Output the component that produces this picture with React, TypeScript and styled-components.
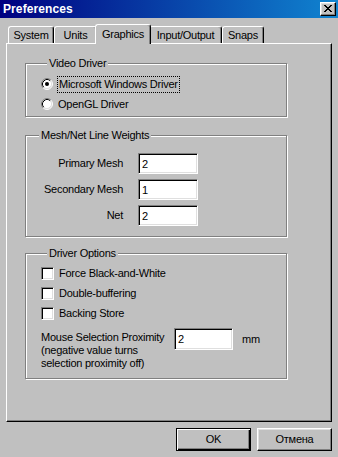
import React from "react";
import styled, { createGlobalStyle } from "styled-components";

const Global = createGlobalStyle`
  html, body { margin: 0; padding: 0; background: #c0c0c0; }
  body { font-family: "Liberation Sans", Arial, sans-serif; font-size: 11px; letter-spacing: -0.25px; color: #000; }
  * { box-sizing: border-box; }
`;

const Window = styled.div`
  width: 338px;
  height: 457px;
  background: #c0c0c0;
  display: flex;
  flex-direction: column;
  overflow: hidden;
`;

const TitleBar = styled.div`
  height: 18px;
  flex: none;
  display: flex;
  align-items: center;
  justify-content: space-between;
  padding: 0 2px 1px 3px;
  background: linear-gradient(90deg, #000080 0%, #1084d0 100%);
`;

const Title = styled.span`
  color: #fff;
  font-weight: bold;
  font-size: 12px;
  line-height: 14px;
  letter-spacing: 0.1px;
`;

const CloseButton = styled.div`
  width: 16px;
  height: 14px;
  display: flex;
  align-items: center;
  justify-content: center;
  background: #c0c0c0;
  border-top: 1px solid #fff;
  border-left: 1px solid #fff;
  border-right: 1px solid #000;
  border-bottom: 1px solid #000;
  box-shadow: inset -1px -1px #808080, inset 1px 1px #dfdfdf;
  padding-bottom: 1px;
`;

const Body = styled.div`
  flex: 1;
  display: flex;
  flex-direction: column;
  padding: 6px 6px 0 6px;
`;

const TabStrip = styled.div`
  position: relative;
  z-index: 1;
  height: 20px;
  margin-bottom: -1px;
  padding-left: 2px;
  display: flex;
  align-items: flex-end;
`;

const Tab = styled.div<{ $w: number; $active?: boolean }>`
  position: relative;
  z-index: ${(p) => (p.$active ? 2 : 1)};
  width: ${(p) => p.$w + (p.$active ? 4 : 0)}px;
  margin: ${(p) => (p.$active ? "0 -2px 0 -2px" : "0 0 1px 0")};
  height: ${(p) => (p.$active ? 20 : 17)}px;
  background: #c0c0c0;
  border-top: 1px solid #fff;
  border-left: 1px solid #fff;
  border-right: 1px solid #000;
  border-radius: 3px 3px 0 0;
  box-shadow: inset -1px 0 #808080;
  display: flex;
  justify-content: center;
  align-items: ${(p) => (p.$active ? "flex-start" : "center")};
  padding-top: ${(p) => (p.$active ? "3px" : "0")};
  line-height: 13px;
  white-space: nowrap;
`;

const Panel = styled.div`
  height: 379px;
  flex: none;
  border-top: 1px solid #fff;
  border-left: 1px solid #fff;
  border-right: 1px solid #000;
  border-bottom: 1px solid #000;
  box-shadow: inset -1px -1px #808080;
  padding: 13px 0 0 18px;
  display: flex;
  flex-direction: column;
  align-items: flex-start;
`;

const Group = styled.fieldset<{ $mt: number; $pad: string }>`
  width: 262px;
  min-width: 0;
  margin: ${(p) => p.$mt}px 0 0 0;
  padding: ${(p) => p.$pad};
  border: 1px solid #808080;
  box-shadow: inset 1px 1px #fff, 1px 1px #fff;
`;

const Legend = styled.legend`
  margin-left: 6px;
  padding: 0 2px;
  line-height: 13px;
  background: #c0c0c0;
`;

const OptionRow = styled.div`
  height: 20px;
  display: flex;
  align-items: center;
`;

const OptionLabel = styled.span<{ $focused?: boolean }>`
  margin-left: ${(p) => (p.$focused ? 4 : 5)}px;
  padding: 1px ${(p) => (p.$focused ? 1 : 0)}px;
  line-height: 13px;
  white-space: nowrap;
  border: ${(p) => (p.$focused ? "1px dotted #000" : "none")};
`;

const FieldGrid = styled.div`
  display: grid;
  grid-template-columns: 90px 60px;
  column-gap: 15px;
  row-gap: 5px;
  align-items: center;
`;

const FieldLabel = styled.span`
  justify-self: end;
  line-height: 13px;
  white-space: nowrap;
`;

const Edit = styled.input<{ $w: number; $h: number }>`
  width: ${(p) => p.$w}px;
  height: ${(p) => p.$h}px;
  margin: 0;
  padding: 0 0 0 3px;
  font-family: "Liberation Sans", Arial, sans-serif;
  font-size: 11px;
  color: #000;
  background: #fff;
  border-top: 1px solid #808080;
  border-left: 1px solid #808080;
  border-right: 1px solid #fff;
  border-bottom: 1px solid #fff;
  box-shadow: inset 1px 1px #000, inset -1px -1px #dfdfdf;
  outline: none;
`;

const CheckBox = styled.span`
  width: 13px;
  height: 13px;
  flex: none;
  background: #fff;
  border-top: 1px solid #808080;
  border-left: 1px solid #808080;
  border-right: 1px solid #fff;
  border-bottom: 1px solid #fff;
  box-shadow: inset 1px 1px #000, inset -1px -1px #dfdfdf;
`;

const ProximityRow = styled.div`
  margin-top: 5px;
  display: flex;
  align-items: flex-start;
`;

const ProximityText = styled.div`
  width: 133px;
  padding-top: 3px;
  line-height: 13px;
  white-space: nowrap;
`;

const Unit = styled.span`
  margin-left: 9px;
  padding-top: 5px;
  line-height: 13px;
`;

const ButtonRow = styled.div`
  margin-top: 6px;
  display: flex;
  justify-content: flex-end;
  gap: 6px;
`;

const Button = styled.div<{ $default?: boolean }>`
  width: 75px;
  height: 23px;
  display: flex;
  align-items: center;
  justify-content: center;
  background: #c0c0c0;
  line-height: 13px;
  ${(p) =>
    p.$default
      ? `border: 1px solid #000; box-shadow: inset 1px 1px #fff, inset -1px -1px #000, inset -2px -2px #808080;`
      : `border-top: 1px solid #fff; border-left: 1px solid #fff; border-right: 1px solid #000; border-bottom: 1px solid #000; box-shadow: inset -1px -1px #808080, inset 1px 1px #dfdfdf;`}
`;

const CloseGlyph = () => {
  const rows = ["11000011", "01100110", "00111100", "00011000", "00111100", "01100110", "11000011"];
  return (
    <svg width="8" height="7" viewBox="0 0 8 7" shapeRendering="crispEdges">
      {rows.flatMap((r, y) =>
        r.split("").map((c, x) => (c === "1" ? <rect key={`${x}-${y}`} x={x} y={y} width="1" height="1" fill="#000" /> : null))
      )}
    </svg>
  );
};

const Radio = ({ checked }: { checked?: boolean }) => (
  <svg width="12" height="12" viewBox="0 0 12 12" style={{ flex: "none" }}>
    <circle cx="6" cy="6" r="5" fill="#fff" />
    <path d="M2.11 9.89 A5.5 5.5 0 0 1 9.89 2.11" fill="none" stroke="#808080" strokeWidth="1" />
    <path d="M9.89 2.11 A5.5 5.5 0 0 1 2.11 9.89" fill="none" stroke="#fff" strokeWidth="1" />
    <path d="M2.82 9.18 A4.5 4.5 0 0 1 9.18 2.82" fill="none" stroke="#000" strokeWidth="1" />
    <path d="M9.18 2.82 A4.5 4.5 0 0 1 2.82 9.18" fill="none" stroke="#dfdfdf" strokeWidth="1" />
    {checked && <circle cx="6" cy="6" r="2" fill="#000" />}
  </svg>
);

const tabs = [
  { label: "System", w: 46 },
  { label: "Units", w: 43 },
  { label: "Graphics", w: 52, active: true },
  { label: "Input/Output", w: 73 },
  { label: "Snaps", w: 42 },
];

export default function App() {
  return (
    <>
      <Global />
      <Window>
        <TitleBar>
          <Title>Preferences</Title>
          <CloseButton>
            <CloseGlyph />
          </CloseButton>
        </TitleBar>
        <Body>
          <TabStrip>
            {tabs.map((t) => (
              <Tab key={t.label} $w={t.w} $active={t.active}>
                {t.label}
              </Tab>
            ))}
          </TabStrip>
          <Panel>
            <Group $mt={0} $pad="4px 0 2px 15px">
              <Legend>Video Driver</Legend>
              <OptionRow>
                <Radio checked />
                <OptionLabel $focused>Microsoft Windows Driver</OptionLabel>
              </OptionRow>
              <OptionRow>
                <Radio />
                <OptionLabel>OpenGL Driver</OptionLabel>
              </OptionRow>
            </Group>
            <Group $mt={12} $pad="11px 0 10px 7px">
              <Legend>Mesh/Net Line Weights</Legend>
              <FieldGrid>
                <FieldLabel>Primary Mesh</FieldLabel>
                <Edit $w={60} $h={21} defaultValue="2" readOnly />
                <FieldLabel>Secondary Mesh</FieldLabel>
                <Edit $w={60} $h={21} defaultValue="1" readOnly />
                <FieldLabel>Net</FieldLabel>
                <Edit $w={60} $h={21} defaultValue="2" readOnly />
              </FieldGrid>
            </Group>
            <Group $mt={10} $pad="3px 0 8px 15px">
              <Legend>Driver Options</Legend>
              <OptionRow>
                <CheckBox />
                <OptionLabel>Force Black-and-White</OptionLabel>
              </OptionRow>
              <OptionRow>
                <CheckBox />
                <OptionLabel>Double-buffering</OptionLabel>
              </OptionRow>
              <OptionRow>
                <CheckBox />
                <OptionLabel>Backing Store</OptionLabel>
              </OptionRow>
              <ProximityRow>
                <ProximityText>
                  Mouse Selection Proximity
                  <br />
                  (negative value turns
                  <br />
                  selection proximity off)
                </ProximityText>
                <Edit $w={59} $h={22} defaultValue="2" readOnly />
                <Unit>mm</Unit>
              </ProximityRow>
            </Group>
          </Panel>
          <ButtonRow>
            <Button $default>OK</Button>
            <Button>Отмена</Button>
          </ButtonRow>
        </Body>
      </Window>
    </>
  );
}
